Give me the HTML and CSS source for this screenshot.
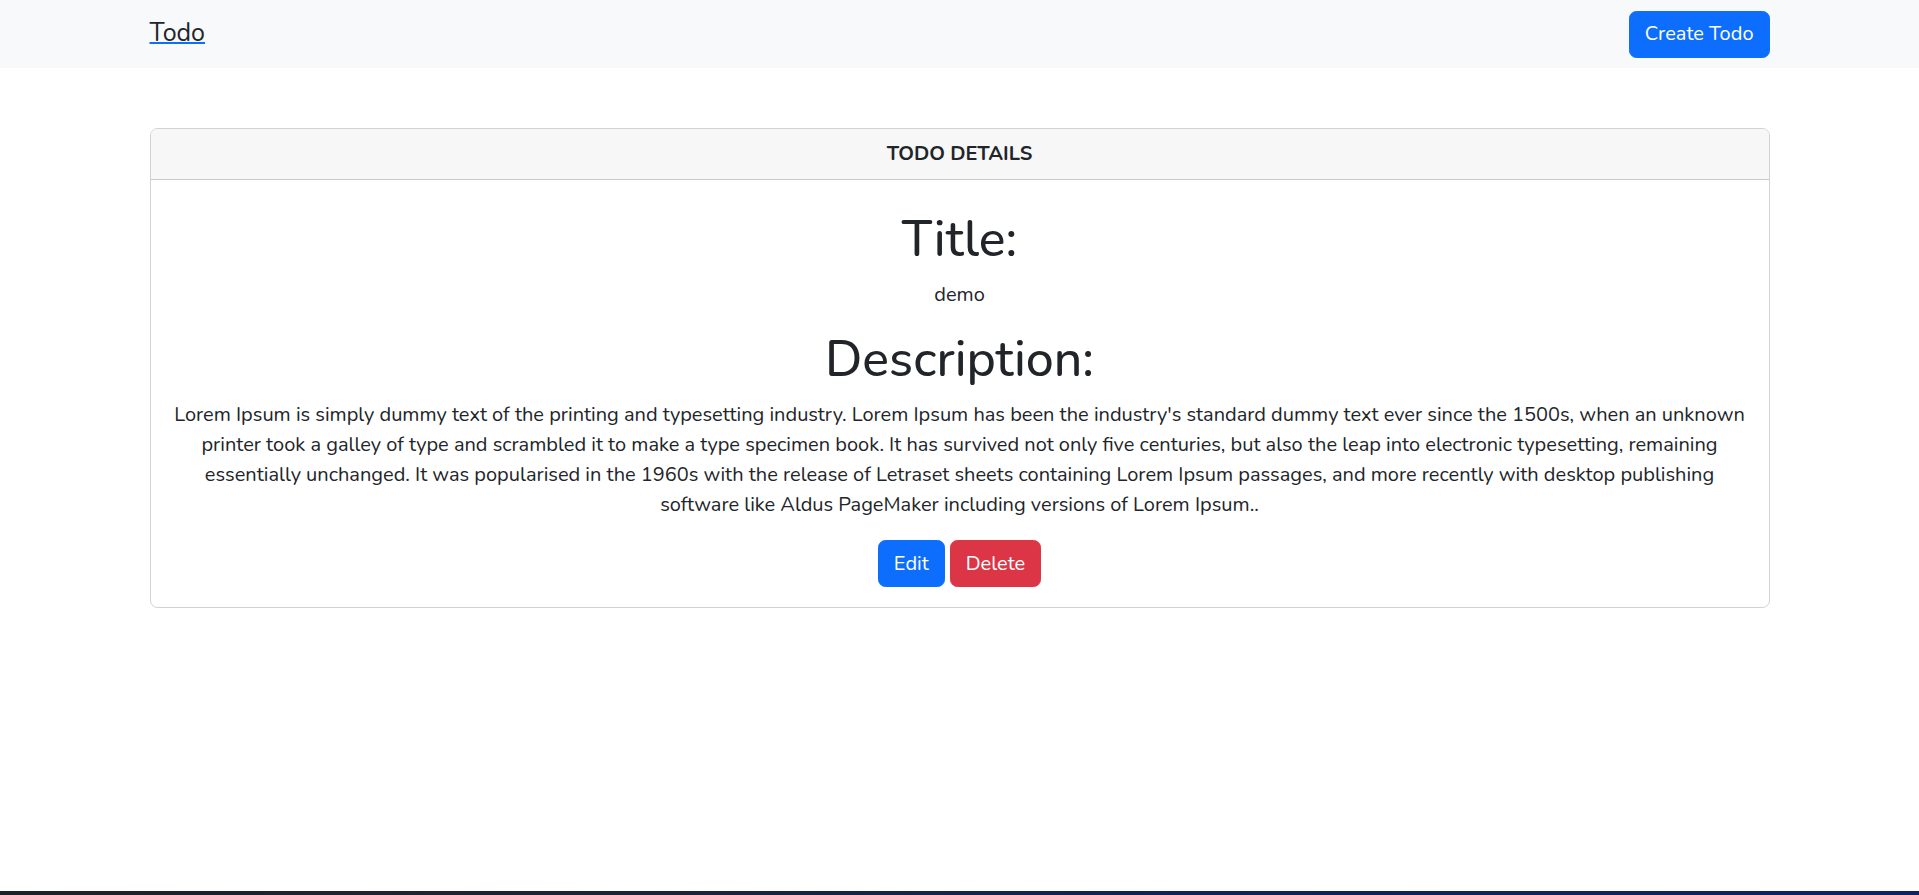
FILE: index.html
```html
<!DOCTYPE html>
<html lang="en">
<head>
<meta charset="utf-8">
<title>Todo</title>
<link rel="stylesheet" href="styles.css">
</head>
<body>
<div class="page">
  <nav class="navbar">
    <div class="container nav-inner">
      <a class="brand" href="#">Todo</a>
      <a class="btn btn-primary" href="#">Create Todo</a>
    </div>
  </nav>
  <main class="container main">
    <section class="card">
      <header class="card-header">TODO DETAILS</header>
      <div class="card-body">
        <h1 class="heading">Title:</h1>
        <p class="text">demo</p>
        <h1 class="heading">Description:</h1>
        <p class="text">Lorem Ipsum is simply dummy text of the printing and typesetting industry. Lorem Ipsum has been the industry's standard dummy text ever since the 1500s, when an unknown printer took a galley of type and scrambled it to make a type specimen book. It has survived not only five centuries, but also the leap into electronic typesetting, remaining essentially unchanged. It was popularised in the 1960s with the release of Letraset sheets containing Lorem Ipsum passages, and more recently with desktop publishing software like Aldus PageMaker including versions of Lorem Ipsum..</p>
        <div class="actions">
          <a class="btn btn-primary" href="#">Edit</a>
          <a class="btn btn-danger" href="#">Delete</a>
        </div>
      </div>
    </section>
  </main>
  <div class="taskbar"></div>
</div>
</body>
</html>
```
FILE: styles.css
```css
* { box-sizing: border-box; }
html, body { margin: 0; padding: 0; }
body {
  font-family: "Nunito", Lato, "Noto Sans", sans-serif;
  font-size: 20px;
  line-height: 30px;
  color: #212529;
  background: #fff;
}
.page {
  min-height: 100vh;
  display: flex;
  flex-direction: column;
}
.container {
  width: 100%;
  max-width: 1650px;
  padding: 0 15px;
  margin: 0 auto;
}
.navbar {
  background: #f8f9fa;
  padding: 10px 0;
}
.nav-inner {
  display: flex;
  align-items: center;
  justify-content: space-between;
  height: 48px;
}
.brand {
  font-size: 25px;
  line-height: 37.5px;
  padding: 5px 0;
  color: #212529;
  text-decoration: underline;
  text-decoration-color: #0d6efd;
  text-decoration-thickness: 2px;
  text-underline-offset: 1px;
}
.btn {
  display: inline-block;
  padding: 7.5px 15px;
  border: 1px solid transparent;
  border-radius: 7.5px;
  font-size: 20px;
  line-height: 30px;
  color: #fff;
  text-decoration: none;
}
.btn-primary { background: #0d6efd; border-color: #0d6efd; }
.btn-danger { background: #dc3545; border-color: #dc3545; }
.main {
  flex: 1;
  padding-top: 60px;
}
.card {
  border: 1px solid rgba(0,0,0,0.175);
  border-radius: 7.5px;
  overflow: hidden;
}
.card-header {
  background: #f7f7f7;
  border-bottom: 1px solid rgba(0,0,0,0.175);
  padding: 10px 20px;
  text-align: center;
  font-weight: 700;
}
.card-body {
  padding: 30px 20px 20px;
  text-align: center;
}
.heading {
  margin: 0 0 10px;
  font-size: 50px;
  line-height: 60px;
  font-weight: 500;
}
.text {
  margin: 0 0 20px;
}
.actions {
  display: flex;
  justify-content: center;
  gap: 5px;
}
.taskbar {
  height: 4px;
  background: linear-gradient(90deg, #1e2227 0%, #1c2535 30%, #0f2358 60%, #0c2466 100%);
}
```
